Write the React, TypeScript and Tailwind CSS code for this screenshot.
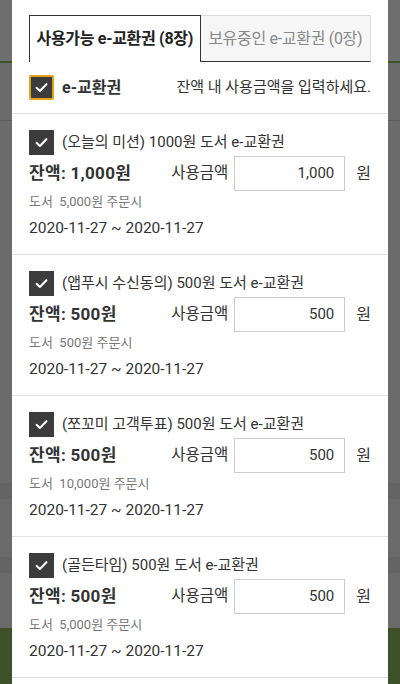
import React from "react";

interface Coupon {
  title: string;
  balance: string;
  amount: string;
  condition: string;
  period: string;
}

const coupons: Coupon[] = [
  {
    title: "(오늘의 미션) 1000원 도서 e-교환권",
    balance: "1,000원",
    amount: "1,000",
    condition: "도서  5,000원 주문시",
    period: "2020-11-27 ~ 2020-11-27",
  },
  {
    title: "(앱푸시 수신동의) 500원 도서 e-교환권",
    balance: "500원",
    amount: "500",
    condition: "도서  500원 주문시",
    period: "2020-11-27 ~ 2020-11-27",
  },
  {
    title: "(쪼꼬미 고객투표) 500원 도서 e-교환권",
    balance: "500원",
    amount: "500",
    condition: "도서  10,000원 주문시",
    period: "2020-11-27 ~ 2020-11-27",
  },
  {
    title: "(골든타임) 500원 도서 e-교환권",
    balance: "500원",
    amount: "500",
    condition: "도서  5,000원 주문시",
    period: "2020-11-27 ~ 2020-11-27",
  },
];

function CheckBox({ focused }: { focused?: boolean }) {
  return (
    <span
      className={
        focused
          ? "flex items-center justify-center w-[25px] h-[25px] bg-[#3c3c3c] border-2 border-[#e3a21a] rounded-[2px] shrink-0"
          : "flex items-center justify-center w-[25px] h-[25px] bg-[#3c3c3c] shrink-0"
      }
    >
      <svg width="15" height="15" viewBox="0 0 14 14" fill="none">
        <path
          d="M2.4 7.3 L5.5 10.2 L11.6 3.9"
          stroke="#fff"
          strokeWidth="1.9"
          strokeLinecap="round"
          strokeLinejoin="round"
        />
      </svg>
    </span>
  );
}

export default function App() {
  return (
    <div
      className="relative w-[400px] h-[684px] overflow-hidden text-[#333]"
      style={{ fontFamily: 'Roboto, "Noto Sans CJK KR", sans-serif' }}
    >
      {/* 뒤쪽 페이지 (딤 처리) */}
      <div className="flex flex-col h-full bg-[#6b6b6b]">
        <div className="h-[61px] bg-[#6e6e6e]"></div>
        <div className="h-[2px] bg-[#3e5229]"></div>
        <div className="h-[58px] bg-[#6b6b6b] border-b border-[#5e5e5e]"></div>
        <div className="h-[362px]"></div>
        <div className="h-[16px] bg-[#646464]"></div>
        <div className="h-[58px]"></div>
        <div className="h-[16px] bg-[#646464]"></div>
        <div className="h-[55px]"></div>
        <div className="flex-1 bg-[#3e5229]"></div>
      </div>

      {/* 모달 */}
      <div className="absolute top-0 bottom-0 left-[12px] right-[12px] bg-white">
        <div className="px-[17px] pt-[15px]">
          <div className="flex h-[47px]">
            <div className="flex-1 flex items-center justify-center border-t border-l border-r border-[#333] bg-white text-[16px] font-bold text-[#222] tracking-[-0.3px]">
              사용가능 e-교환권 (8장)
            </div>
            <div className="flex-1 flex items-center justify-center border-t border-r border-[#ddd] border-b-[1px] border-b-[#333] bg-[#f6f6f6] text-[16px] text-[#888] tracking-[-0.3px]">
              보유중인 e-교환권 (0장)
            </div>
          </div>
          <div className="flex items-center justify-between mt-[13px] h-[25px] mb-[13px]">
            <div className="flex items-center gap-[8px]">
              <CheckBox focused />
              <span className="text-[16px] font-bold text-[#333]">e-교환권</span>
            </div>
            <span className="text-[15px] text-[#333]">잔액 내 사용금액을 입력하세요.</span>
          </div>
        </div>
        <div className="border-t border-[#e2e2e2]">
          {coupons.map((c, i) => (
            <div key={i} className="px-[17px] pt-[16px] pb-[15px] border-b border-[#e2e2e2]">
              <div className="flex items-center gap-[8px] h-[25px]">
                <CheckBox />
                <span className="text-[15px] text-[#333]">{c.title}</span>
              </div>
              <div className="flex items-center justify-between mt-[1px] h-[35px]">
                <span className="text-[17px] font-bold text-[#333] tracking-[0.3px]">
                  잔액: {c.balance}
                </span>
                <div className="flex items-center">
                  <span className="text-[15.5px] text-[#333]">사용금액</span>
                  <div className="ml-[6px] w-[111px] h-[35px] border border-[#ccc] flex items-center justify-end pr-[10px] text-[15px] text-[#333]">
                    {c.amount}
                  </div>
                  <span className="ml-[11px] text-[16px] text-[#333]">원</span>
                </div>
              </div>
              <div className="mt-[2px] text-[13px] leading-[18px] text-[#777] whitespace-pre">
                {c.condition}
              </div>
              <div className="mt-[6px] text-[15.5px] leading-[22px] text-[#333]">{c.period}</div>
            </div>
          ))}
        </div>
      </div>
    </div>
  );
}
